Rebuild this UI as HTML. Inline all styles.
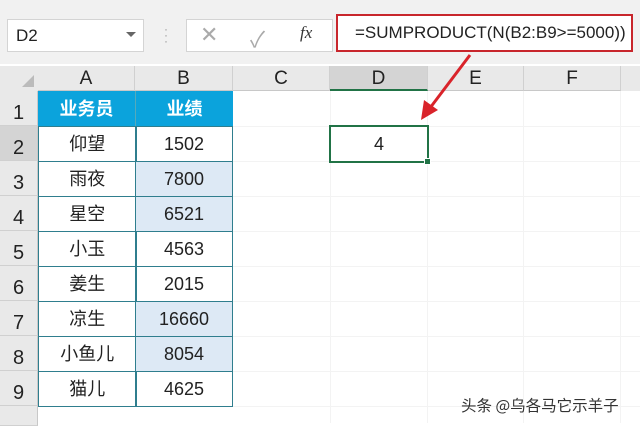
<!DOCTYPE html>
<html><head><meta charset="utf-8"><style>
*{margin:0;padding:0;box-sizing:border-box}
body{width:640px;height:423px;position:relative;overflow:hidden;background:#fff;font-family:"Liberation Sans","Noto Sans CJK SC",sans-serif}
.a{position:absolute}
.ch{position:absolute;top:66px;height:25px;background:#e9e9e9;border-right:1px solid #d0d0d0;font-size:19px;color:#222;text-align:center;line-height:25px;border-bottom:1px solid #c8c8c8}
.rh{position:absolute;left:0;width:38px;height:35px;background:#e9e9e9;border-bottom:1px solid #d0d0d0;border-right:1px solid #c8c8c8;font-size:20px;color:#222;text-align:center;line-height:44px}
.c{position:absolute;height:36px;border:1.5px solid #2f7e8e;font-size:18px;color:#222;text-align:center;line-height:34px;font-family:"Liberation Sans","Noto Sans CJK SC",sans-serif}
.g{position:absolute;left:233px;width:407px;height:1px;background:#f3f3f3}
.v{position:absolute;top:91px;width:1px;height:332px;background:#f3f3f3}
</style></head><body>
<div class="a" style="left:0;top:0;width:640px;height:64px;background:#f1f1f1"></div>
<div class="a" style="left:7px;top:19px;width:137px;height:33px;background:#fff;border:1px solid #d4d4d4;font-size:17px;line-height:31px;padding-left:8px;color:#222">D2</div>
<div class="a" style="left:126px;top:32px;width:0;height:0;border-left:5px solid transparent;border-right:5px solid transparent;border-top:5px solid #666"></div>
<div class="a" style="left:164px;top:26px;color:#999;font-size:12px;line-height:6px">·<br>·<br>·</div>
<div class="a" style="left:186px;top:19px;width:147px;height:33px;background:#fff;border:1px solid #d4d4d4"></div>
<div class="a" style="left:200px;top:22px;font-size:22px;color:#aaa">✕</div>
<div class="a" style="left:250px;top:22px;font-size:22px;color:#aaa">✓</div>
<div class="a" style="left:300px;top:23px;font-size:17px;font-style:italic;font-family:'Liberation Serif',serif;color:#333">fx</div>
<div class="a" style="left:336px;top:14px;width:297px;height:38px;background:#fff;border:2.5px solid #c8262c;font-size:17px;line-height:33px;padding-left:17px;color:#222;white-space:nowrap">=SUMPRODUCT(N(B2:B9&gt;=5000))</div>
<div class="a" style="left:0;top:66px;width:640px;height:25px;background:#e9e9e9"></div>
<div class="a" style="left:22px;top:75px;width:0;height:0;border-left:12px solid transparent;border-bottom:12px solid #bbb"></div>
<div class="ch" style="left:38px;width:97px">A</div>
<div class="ch" style="left:135px;width:98px">B</div>
<div class="ch" style="left:233px;width:97px">C</div>
<div class="ch" style="left:330px;width:98px;background:#d4d4d4;border-bottom:2px solid #217346">D</div>
<div class="ch" style="left:428px;width:96px">E</div>
<div class="ch" style="left:524px;width:97px">F</div>
<div class="rh" style="top:91px">1</div>
<div class="rh" style="top:126px;background:#d4d4d4">2</div>
<div class="rh" style="top:161px">3</div>
<div class="rh" style="top:196px">4</div>
<div class="rh" style="top:231px">5</div>
<div class="rh" style="top:266px">6</div>
<div class="rh" style="top:301px">7</div>
<div class="rh" style="top:336px">8</div>
<div class="rh" style="top:371px">9</div>
<div class="rh" style="top:406px;height:20px"></div>
<div class="g" style="top:126px"></div><div class="g" style="top:161px"></div><div class="g" style="top:196px"></div><div class="g" style="top:231px"></div><div class="g" style="top:266px"></div><div class="g" style="top:301px"></div><div class="g" style="top:336px"></div><div class="g" style="top:371px"></div><div class="g" style="top:406px"></div>
<div class="v" style="left:330px"></div><div class="v" style="left:427px"></div><div class="v" style="left:523px"></div><div class="v" style="left:620px"></div>
<div class="a" style="left:38px;top:91px;width:195px;height:35px;background:#0ba3dc"></div>
<div class="a" style="left:38px;top:91px;width:97px;height:35px;color:#fff;font-weight:bold;font-size:18px;text-align:center;line-height:35px;font-family:'Noto Sans CJK SC',sans-serif">业务员</div>
<div class="a" style="left:135px;top:91px;width:98px;height:35px;color:#fff;font-weight:bold;font-size:18px;text-align:center;line-height:35px;font-family:'Noto Sans CJK SC',sans-serif;border-left:1px solid #5ab">业绩</div>
<div class="c" style="left:38px;top:126px;width:98.5px">仰望</div><div class="c" style="left:135px;top:126px;width:98px">1502</div>
<div class="c" style="left:38px;top:161px;width:98.5px">雨夜</div><div class="c" style="left:135px;top:161px;width:98px;background:#dde9f5">7800</div>
<div class="c" style="left:38px;top:196px;width:98.5px">星空</div><div class="c" style="left:135px;top:196px;width:98px;background:#dde9f5">6521</div>
<div class="c" style="left:38px;top:231px;width:98.5px">小玉</div><div class="c" style="left:135px;top:231px;width:98px">4563</div>
<div class="c" style="left:38px;top:266px;width:98.5px">姜生</div><div class="c" style="left:135px;top:266px;width:98px">2015</div>
<div class="c" style="left:38px;top:301px;width:98.5px">凉生</div><div class="c" style="left:135px;top:301px;width:98px;background:#dde9f5">16660</div>
<div class="c" style="left:38px;top:336px;width:98.5px">小鱼儿</div><div class="c" style="left:135px;top:336px;width:98px;background:#dde9f5">8054</div>
<div class="c" style="left:38px;top:371px;width:98.5px">猫儿</div><div class="c" style="left:135px;top:371px;width:98px">4625</div>
<div class="a" style="left:329px;top:125px;width:100px;height:38px;border:2px solid #217346;font-size:18px;text-align:center;line-height:34px;color:#222">4</div>
<div class="a" style="left:424px;top:158px;width:7px;height:7px;background:#217346;border:1px solid #fff"></div>
<svg class="a" style="left:0;top:0" width="640" height="423"><line x1="470" y1="55" x2="430" y2="108" stroke="#d9232a" stroke-width="3"/><polygon points="421,120 424,100 438,110" fill="#d9232a"/></svg>
<div class="a" style="left:461px;top:394px;font-size:15.5px;color:#333;font-family:'Noto Sans CJK SC',sans-serif">头条 @乌各马它示羊子</div>
</body></html>
